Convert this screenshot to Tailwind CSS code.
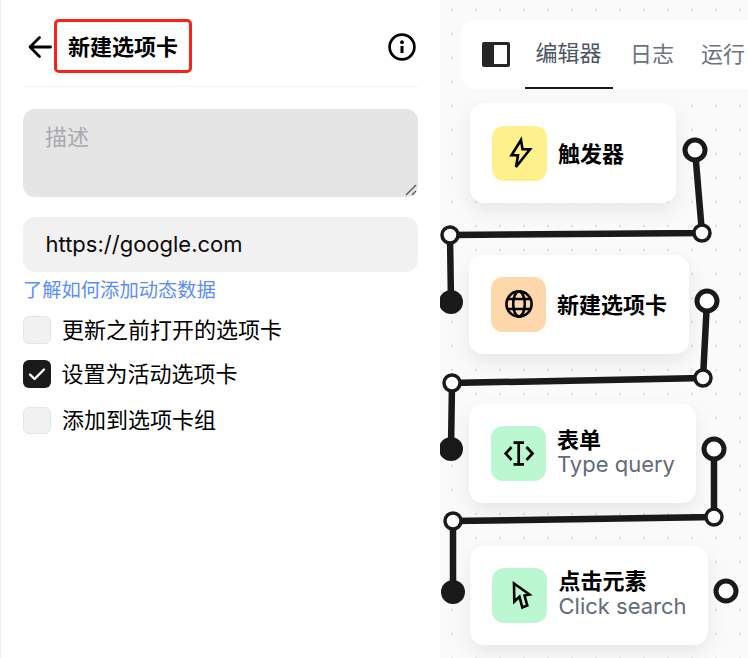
<!DOCTYPE html>
<html lang="zh-CN">
<head>
<meta charset="utf-8">
<script src="https://cdn.jsdelivr.net/npm/@tailwindcss/browser@4"></script>
</head>
<body class="m-0 overflow-hidden bg-white font-['Inter','Noto_Sans_CJK_SC',sans-serif] text-black">
<div class="flex h-[658px] w-[748px] overflow-hidden">
  <!-- left panel -->
  <aside class="flex h-full w-[440px] shrink-0 flex-col border-l border-[#f0f0f0] bg-white pl-[22px] pr-[22px]">
    <header class="flex h-[87px] items-center border-b border-[#f3f3f3] pt-[8px]">
      <svg class="ml-[5px] h-[24px] w-[24px]" viewBox="0 0 24 24" fill="none" stroke="#000" stroke-width="2.8" stroke-linecap="round" stroke-linejoin="round"><path d="M22.5 12H2M11.5 2.5L2 12l9.5 9.5"/></svg>
      <div class="relative ml-[16px] flex-1">
        <h1 class="text-[22px] leading-[30px] font-bold">新建选项卡</h1>
        <div class="absolute left-[-14px] top-[-13px] h-[54px] w-[138px] rounded-[5px] border-[3px] border-[#fb2117]"></div>
      </div>
      <svg class="mr-[2.5px] h-[28px] w-[28px]" viewBox="0 0 28 28" fill="none"><circle cx="14" cy="14" r="12.4" stroke="#000" stroke-width="2.7"/><circle cx="14" cy="9.2" r="1.9" fill="#000"/><path d="M14 13v7" stroke="#000" stroke-width="3" /></svg>
    </header>
    <div class="relative mt-[22px] h-[88px] rounded-[12px] bg-[#e5e5e5] px-[22px] pt-[11px] text-[22px] leading-[34px] text-[#a9a9ae]">
      描述
      <svg class="absolute bottom-[1px] right-[1px] h-[12px] w-[12px]" viewBox="0 0 12 12" fill="none" stroke="#555" stroke-width="1.4"><path d="M1 11L11 1M7 11l4-4"/></svg>
    </div>
    <div class="mt-[20px] flex h-[55px] items-center rounded-[12px] bg-[#f1f1f1] px-[22.5px] text-[22px] text-[#0a0a0a]">https://google.com</div>
    <a class="mt-[6px] h-[24px] text-[19.3px] leading-[24px] text-[#5b8cfb]">了解如何添加动态数据</a>
    <div class="mt-[14px] flex h-[28px] items-center gap-[11px] text-[22px]">
      <span class="h-[28px] w-[28px] rounded-[6px] border border-[#e5e5e5] bg-[#f1f1f1]"></span>更新之前打开的选项卡
    </div>
    <div class="mt-[16px] flex h-[28px] items-center gap-[10.5px] text-[22px]">
      <span class="flex h-[28px] w-[28px] items-center justify-center rounded-[6px] bg-[#1a1a1a]"><svg class="h-[18px] w-[18px]" viewBox="0 0 18 18" fill="none" stroke="#fff" stroke-width="2.4" stroke-linecap="round" stroke-linejoin="round"><path d="M2 9.5l4.5 4.5L16 4.5"/></svg></span>设置为活动选项卡
    </div>
    <div class="mt-[19px] flex h-[27px] items-center gap-[11px] text-[22px]">
      <span class="h-[27px] w-[28px] rounded-[6px] border border-[#e5e5e5] bg-[#f1f1f1]"></span>添加到选项卡组
    </div>
  </aside>

  <!-- canvas -->
  <main class="relative h-full flex-1 overflow-hidden bg-[#fafafa] bg-[radial-gradient(circle,#e2e2e2_1.4px,transparent_1.6px)] bg-[size:24px_24px] bg-[position:0px_-2px]">
    <svg class="absolute left-0 top-0 h-[658px] w-[308px]" viewBox="440 0 308 658" fill="none" stroke="#1a1a1a" stroke-width="6.5">
      <path d="M695 150L702 233L450 235L451 302"/>
      <path d="M707 301L703 378L452 383L451 449"/>
      <path d="M714 449L714 517L453 521L453 592"/>
      <g fill="#1a1a1a" stroke="none">
        <circle cx="451" cy="302" r="12"/><circle cx="451" cy="449" r="12"/><circle cx="453" cy="592" r="12"/>
      </g>
      <g fill="#fff" stroke-width="5">
        <circle cx="695" cy="150" r="10"/><circle cx="707" cy="301" r="10"/><circle cx="714" cy="449" r="10"/><circle cx="726" cy="591" r="10"/>
      </g>
      <g fill="#fff" stroke-width="3.5">
        <circle cx="450" cy="235" r="8"/><circle cx="702" cy="233" r="8"/><circle cx="452" cy="383" r="8"/><circle cx="703" cy="378" r="8"/><circle cx="453" cy="521" r="8"/><circle cx="714" cy="517" r="8"/>
      </g>
    </svg>

    <!-- tab bar -->
    <div class="absolute left-[22px] top-[20px] flex h-[69px] w-[290px] items-center rounded-tl-[12px] rounded-bl-[12px] bg-white">
      <svg class="ml-[20px] h-[25px] w-[28px]" viewBox="0 0 28 25"><rect x="0" y="0" width="28" height="25" rx="2" fill="#262626"/><rect x="12" y="3" width="13" height="19" fill="#fff"/></svg>
      <div class="ml-[15px] flex h-full w-[88px] items-center justify-center border-b-2 border-[#1a1a1a] text-[22px] text-[#4b5563]"><span class="mr-[1px]">编辑器</span></div>
      <div class="ml-[17px] text-[22px] text-[#6b7280]">日志</div>
      <div class="ml-[27px] text-[22px] whitespace-nowrap text-[#6b7280]">运行</div>
    </div>

    <!-- nodes -->
    <div class="absolute left-[30px] top-[103px] flex h-[100px] w-[206px] items-center gap-[11px] rounded-[14px] bg-white pl-[22px] shadow-[0_8px_20px_rgba(0,0,0,0.08)]">
      <svg class="h-[55px] w-[55px] rounded-[12px] bg-[#fef08a]" viewBox="0 0 55 55" fill="none" stroke="#000" stroke-width="2.6" stroke-linejoin="miter"><path d="M29 14L19.5 29.3H26L24 41L38 23.3H30.5Z"/></svg>
      <div class="pt-[3px] text-[22px] font-bold">触发器</div>
    </div>

    <div class="absolute left-[29px] top-[255px] flex h-[99px] w-[220px] items-center gap-[11px] rounded-[14px] bg-white pl-[22px] shadow-[0_8px_20px_rgba(0,0,0,0.08)]">
      <svg class="h-[55px] w-[55px] rounded-[12px] bg-[#fed7aa]" viewBox="0 0 55 55" fill="none" stroke="#000" stroke-width="2.6"><circle cx="28" cy="27" r="12.6"/><ellipse cx="28" cy="27" rx="5.8" ry="12.6"/><path d="M16 22h24M16 32h24"/></svg>
      <div class="pt-[2px] text-[22px] font-bold">新建选项卡</div>
    </div>

    <div class="absolute left-[29px] top-[404px] flex h-[99px] w-[227px] items-center gap-[11px] rounded-[14px] bg-white pl-[22px] shadow-[0_8px_20px_rgba(0,0,0,0.08)]">
      <svg class="h-[55px] w-[55px] rounded-[12px] bg-[#bbf7d0]" viewBox="0 0 55 55" fill="none" stroke="#000" stroke-width="2.7"><path d="M20.5 21L14.7 27.5L20.5 34M35.5 21L41.5 27.5L35.5 34M22.5 16.7h10.5M22.5 38.3h10.5M27.7 16.7v21.6"/></svg>
      <div class="flex flex-col pb-[3px]">
        <div class="text-[22px] leading-[25px] font-bold">表单</div>
        <div class="text-[22px] leading-[23px] text-[#636a79]">Type query</div>
      </div>
    </div>

    <div class="absolute left-[30px] top-[546px] flex h-[99px] w-[238px] items-center gap-[11px] rounded-[14px] bg-white pl-[22px] shadow-[0_8px_20px_rgba(0,0,0,0.08)]">
      <svg class="h-[55px] w-[55px] rounded-[12px] bg-[#bbf7d0]" viewBox="0 0 55 55" fill="none" stroke="#000" stroke-width="2.6" stroke-linejoin="miter"><path d="M22 15.5L22.3 33.5L27.5 28.7L30.3 39.5L35.3 37.5L32.5 27.5L37.5 26.5Z"/></svg>
      <div class="flex flex-col pb-[4px] pl-[0.5px]">
        <div class="text-[22px] leading-[25px] font-bold">点击元素</div>
        <div class="text-[22px] leading-[24px] text-[#636a79]">Click search</div>
      </div>
    </div>
  </main>
</div>
</body>
</html>
